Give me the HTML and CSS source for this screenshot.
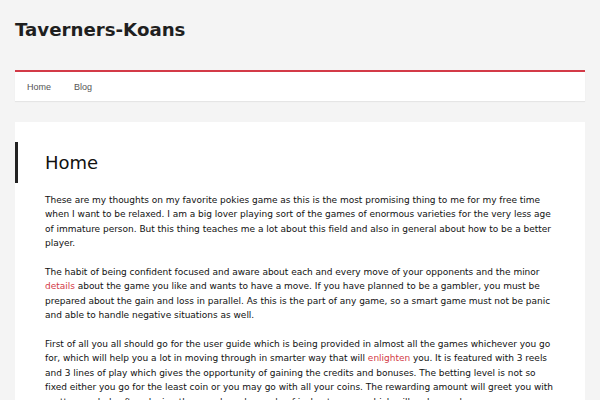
FILE: index.html
```html
<!DOCTYPE html>
<html>
<head>
<meta charset="utf-8">
<link rel="stylesheet" href="styles.css">
</head>
<body>
<header class="site-header">
  <div class="site-title">Taverners-Koans</div>
</header>
<nav class="main-nav">
  <a href="#">Home</a>
  <a href="#">Blog</a>
</nav>
<main class="card">
  <h1 class="entry-title">Home</h1>
  <div class="entry-content">
    <p>These are my thoughts on my favorite pokies game as this is the most promising thing to me for my free time when I want to be relaxed. I am a big lover playing sort of the games of enormous varieties for the very less age of immature person. But this thing teaches me a lot about this field and also in general about how to be a better player.</p>
    <p>The habit of being confident focused and aware about each and every move of your opponents and the minor <a href="#">details</a> about the game you like and wants to have a move. If you have planned to be a gambler, you must be prepared about the gain and loss in parallel. As this is the part of any game, so a smart game must not be panic and able to handle negative situations as well.</p>
    <p>First of all you all should go for the user guide which is being provided in almost all the games whichever you go for, which will help you a lot in moving through in smarter way that will <a href="#">enlighten</a> you. It is featured with 3 reels and 3 lines of play which gives the opportunity of gaining the credits and bonuses. The betting level is not so fixed either you go for the least coin or you may go with all your coins. The rewarding amount will greet you with scatter symbols after playing the rounds and a mode of jackpot games which will make you happy.</p>
  </div>
</main>
</body>
</html>
```
FILE: styles.css
```css
html, body {
  margin: 0;
  padding: 0;
  background: #f4f4f4;
}
body {
  font-family: "DejaVu Sans", Verdana, sans-serif;
  color: #222;
  padding: 0 15px;
}
.site-header {
  height: 70px;
  display: flex;
  align-items: flex-start;
}
.site-title {
  font-size: 18.2px;
  font-weight: bold;
  color: #1f1f1f;
  margin-top: 19px;
  line-height: 22px;
}
.main-nav {
  background: #fff;
  border-top: 2px solid #d33a47;
  height: 29px;
  display: flex;
  align-items: center;
  padding-left: 12px;
  gap: 23px;
  box-shadow: 0 1px 1px rgba(0,0,0,0.06);
}
.main-nav a {
  font-family: "Liberation Sans", Arial, sans-serif;
  font-size: 9px;
  color: #555;
  text-decoration: none;
}
.card {
  display: block;
  background: #fff;
  margin-top: 21px;
  padding: 20px 25px 20px 30px;
}
.entry-title {
  margin: 0 0 0 -30px;
  padding: 10px 0 10px 27px;
  border-left: 3px solid #222;
  font-size: 18px;
  font-weight: normal;
  line-height: 21px;
  color: #111;
}
.entry-content {
  margin-top: 10px;
  font-size: 9px;
  letter-spacing: -0.02px;
  line-height: 14.4px;
  color: #111;
}
.entry-content p {
  margin: 0 0 14.4px 0;
}
.entry-content a {
  color: #d33a47;
  text-decoration: none;
}
```
